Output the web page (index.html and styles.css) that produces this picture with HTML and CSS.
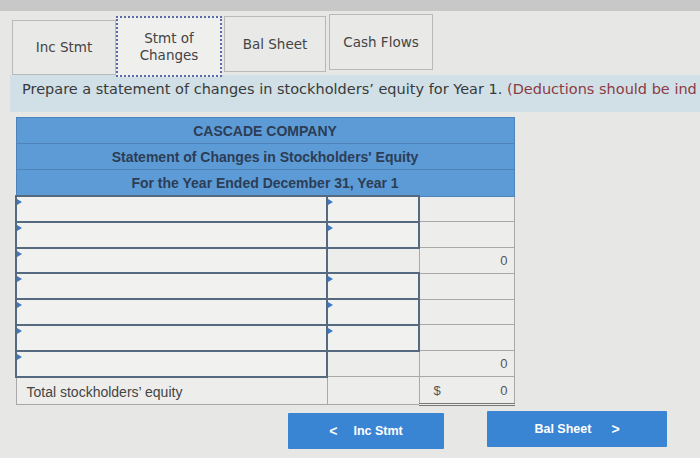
FILE: index.html
```html
<!DOCTYPE html>
<html>
<head>
<meta charset="utf-8">
<link rel="stylesheet" href="styles.css">
</head>
<body>
<div class="topbar"></div>
<div class="tabs">
  <div class="tab t1">Inc Stmt</div>
  <div class="tab t2 active">Stmt of<br>Changes</div>
  <div class="tab t3">Bal Sheet</div>
  <div class="tab t4">Cash Flows</div>
</div>
<div class="prompt">Prepare a statement of changes in stockholders’ equity for Year 1. <span class="red">(Deductions should be ind</span></div>
<table class="sheet">
  <colgroup><col class="c1"><col class="c2"><col class="c3"></colgroup>
  <tr class="hd"><td colspan="3">CASCADE COMPANY</td></tr>
  <tr class="hd"><td colspan="3">Statement of Changes in Stockholders' Equity</td></tr>
  <tr class="hd"><td colspan="3">For the Year Ended December 31, Year 1</td></tr>
  <tr><td class="in"></td><td class="in"></td><td class="val"></td></tr>
  <tr><td class="in"></td><td class="in"></td><td class="val"></td></tr>
  <tr><td class="in"></td><td class="plain"></td><td class="val">0</td></tr>
  <tr><td class="in"></td><td class="in"></td><td class="val"></td></tr>
  <tr><td class="in"></td><td class="in"></td><td class="val"></td></tr>
  <tr><td class="in"></td><td class="in"></td><td class="val"></td></tr>
  <tr><td class="in"></td><td class="plain"></td><td class="val">0</td></tr>
  <tr><td class="plain label">Total stockholders’ equity</td><td class="plain"></td><td class="val total"><span class="dollar">$</span>0</td></tr>
</table>
<div class="nav">
  <div class="btn prev"><span class="chev">&lt;</span>Inc Stmt</div>
  <div class="btn next">Bal Sheet<span class="chev">&gt;</span></div>
</div>
</body>
</html>
```
FILE: styles.css
```css
html, body {
  margin: 0;
  padding: 0;
}
body {
  width: 700px;
  height: 458px;
  overflow: hidden;
  background: #e7e7e5;
  font-family: "DejaVu Sans", Verdana, sans-serif;
  color: #3a3a3a;
}
.topbar {
  height: 11px;
  background: #c8c8c8;
}
.tabs {
  display: flex;
  align-items: flex-start;
  padding-left: 12px;
  height: 64px;
  position: relative;
  z-index: 2;
}
.tab {
  box-sizing: border-box;
  width: 104px;
  height: 56px;
  background: #e9e9e8;
  border: 1px solid #b9b9b9;
  display: flex;
  align-items: center;
  justify-content: center;
  text-align: center;
  font-size: 13.5px;
  line-height: 17px;
  color: #444;
}
.t1 { margin-top: 9px; height: 55px; }
.t2 { margin-top: 5px; height: 61px; width: 106px; }
.t3 { margin-top: 5px; margin-left: 2px; width: 102px; }
.t4 { margin-top: 3px; margin-left: 3px; }
.active {
  background: #efefee;
  border: 2px dotted #5a6aa6;
}
.prompt {
  margin-left: 10px;
  height: 37px;
  background: #d0e0e6;
  box-sizing: border-box;
  padding: 6px 0 0 12px;
  font-size: 14.5px;
  white-space: nowrap;
  overflow: hidden;
  color: #3a3a3a;
}
.red { color: #8e3a44; }
.sheet {
  margin: 5px 0 0 15px;
  width: 498px;
  border-collapse: collapse;
  font-family: "Liberation Sans", Arial, sans-serif;
  font-size: 13px;
  table-layout: fixed;
}
.c1 { width: 311px; }
.c2 { width: 92px; }
.c3 { width: 95px; }
.hd td {
  background: #5d9bd6;
  border: 1px solid #4f84bb;
  text-align: center;
  font-weight: bold;
  font-size: 14px;
  color: #2c3d55;
  height: 25px;
  padding: 0;
}
.sheet tr:not(.hd) td {
  height: 23.8px;
  padding: 0;
}
td.in {
  border: 2px solid #55697f;
  background: #f1f1f0;
  position: relative;
}
td.in::before {
  content: "";
  position: absolute;
  left: 0;
  top: 2px;
  border-left: 5px solid #3d78c4;
  border-top: 3px solid transparent;
  border-bottom: 3px solid transparent;
}
td.plain {
  border: 1px solid #a9a9a9;
  background: #ededec;
}
td.val {
  border: 1px solid #a9a9a9;
  background: #ededec;
  text-align: right;
  padding-right: 6px !important;
  color: #555;
  font-size: 13px;
}
td.label {
  color: #444;
  font-size: 14px;
  padding-left: 10px !important;
  padding-top: 3px !important;
}
td.total {
  border-bottom: 3px double #777;
}
.dollar {
  float: left;
  padding-left: 14px;
}
.nav {
  display: flex;
  padding-left: 288px;
  margin-top: 5px;
  align-items: flex-start;
}
.btn {
  box-sizing: border-box;
  height: 36px;
  background: #3a84d4;
  color: #fff;
  font-family: "Liberation Sans", Arial, sans-serif;
  font-weight: bold;
  font-size: 12.5px;
  display: flex;
  align-items: center;
  justify-content: center;
  border-radius: 1px;
}
.prev { width: 156px; margin-top: 2px; }
.next { width: 180px; margin-left: 43px; }
.prev .chev { margin-right: 16px; font-size: 14px; }
.next .chev { margin-left: 20px; font-size: 14px; }
```
